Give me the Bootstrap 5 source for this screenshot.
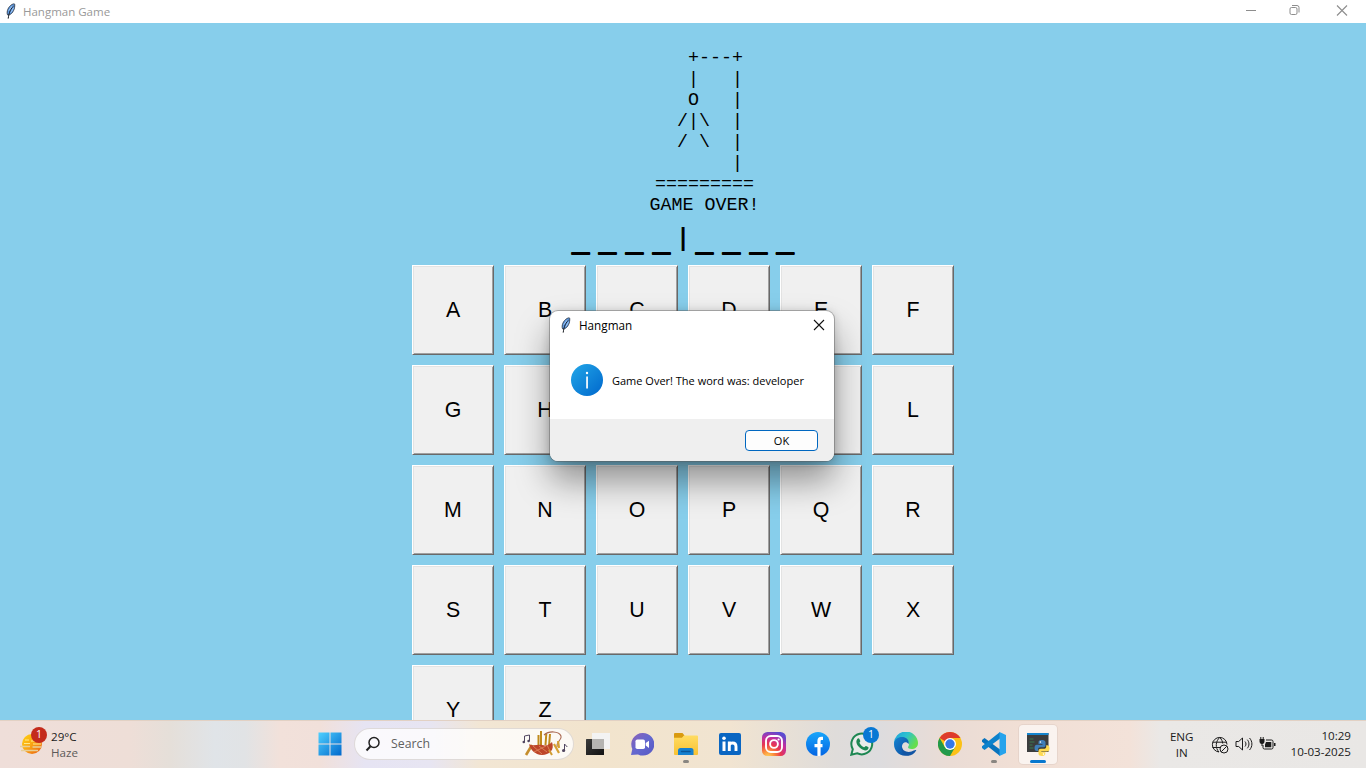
<!DOCTYPE html>
<html lang="en">
<head>
<meta charset="utf-8">
<meta name="viewport" content="width=device-width, initial-scale=1">
<title>Hangman Game</title>
<link href="https://cdn.jsdelivr.net/npm/bootstrap@5.3.0/dist/css/bootstrap.min.css" rel="stylesheet">
<style>
  body { font-family: "Open Sans", "Noto Sans", sans-serif; height: 768px; background: #87ceeb; color: #000; }
  svg { display: block; flex: none; }
  .titlebar { height: 23px; font-size: 11.5px; color: #999; background: #fff; }
  .win-controls { margin: -2px 2px 0 0; }
  .win-controls svg { width: 45.5px; height: 21px; }
  .game-area { min-height: 0; background: #87ceeb; }
  .gallows { font: 18.33px/21px "Liberation Mono", monospace; margin: 25px 0 0 43px; overflow: visible; color: #000; }
  .word { font: 32.3px/40px "Liberation Sans", sans-serif; height: 40px; margin-top: 4px; white-space: pre; }
  .word b { font-weight: 400; vertical-align: 3px; line-height: 1; text-shadow: 0 -1px #000; }
  .keys { display: grid; grid-template-columns: repeat(6, 82px); grid-auto-rows: 90px; gap: 10px; margin-top: 5px; }
  .key { font: 21.33px/1 "Liberation Sans", sans-serif; color: #000; background: #f0f0f0; border: 1px solid; border-color: #fff #696969 #696969 #fff; border-radius: 0; padding: 2px 0 0;
         box-shadow: inset 1px 1px #e3e3e3, inset -1px -1px #a0a0a0; }
  .dialog-box { left: 550px; top: 311px; width: 284px; height: 150px; border-radius: 8px; overflow: hidden; background: #fff;
            box-shadow: 0 0 0 1px rgba(90,90,90,.42), 0 1px 10px rgba(0,0,0,.18), 0 20px 34px rgba(0,0,0,.4); }
  .dialog-title { height: 30px; font-size: 11.7px; }
  .dialog-body { height: 78px; font-size: 11px; }
  .dialog-foot { height: 42px; background: #efefef; }
  .ok-btn { width: 73px; height: 21px; font-size: 11px; line-height: 1; padding: 0; background: #fdfdfd; border: 1px solid #0067c0; border-radius: 4px; color: #000; }
  .taskbar { height: 48px; border-top: 1px solid #e2d1c4; font-size: 11.6px; line-height: 16px; color: #1b1b1b;
             background: linear-gradient(90deg, #efded9 0, #eeded7 130px, #e5dfd9 170px, #e0e4e8 215px, #e1e3e5 245px, #f2e1da 280px, #f1e0da 320px, #e6e4f3 365px, #e7e5f2 430px, #f2e6d4 480px, #f2e4cd 600px, #f1e4d1 730px, #dfdcda 835px, #dddcde 880px, #eadcd5 950px, #f1dfd5 1020px, #f3e2d9 1130px, #eae8e6 1160px, #e9e7e5 100%); }
  .weather { width: 308px; padding-left: 20px; }
  .slot { width: 44px; height: 47px; }
  .slot.on::before { content: ""; position: absolute; inset: 4px 3px 4px 3px; background: rgba(255,255,255,.62); border-radius: 4px; box-shadow: 0 0 0 1px rgba(160,140,130,.12); }
  .slot > svg { position: relative; margin-top: -1px; }
  .run-dot { bottom: 5px; left: 19px; width: 6px; height: 3px; border-radius: 2px; background: #898681; }
  .run-bar { bottom: 5px; left: 14px; width: 16px; height: 3px; border-radius: 2px; background: #0878cf; }
  .search-pill { width: 220px; height: 32px; margin: -1px 2px 0 2px; border-radius: 16px; background: rgba(255,255,255,.78); border: 1px solid rgba(150,135,130,.28); color: #606060; font-size: 12.3px; }
  .count { width: 16px; height: 16px; border-radius: 50%; font-size: 10.5px; line-height: 15px; color: #fff; text-align: center; }
  .tray { padding-right: 15px; }
</style>
</head>
<body class="d-flex flex-column overflow-hidden position-relative">

<svg width="0" height="0" class="position-absolute">
  <defs>
    <symbol id="feather" viewBox="0 0 12 16">
      <path d="M2.500 11.800C1.300 8.500 3.300 3.500 7 1.500c1.500-.8 2.700-.9 2.700-.1.400 4-1.600 8.800-5.300 10.400z" fill="#5f9ae2" stroke="#242c38" stroke-width=".8"/>
      <path d="M8.500 2.800C6 5.500 4 9 3.200 15.600" fill="none" stroke="#14181f" stroke-width="1"/>
      <path d="M3.900 7.500 7.300 3M6 9.500 8.500 5" stroke="#a9cdf5" stroke-width=".9"/>
    </symbol>
    <linearGradient id="gWin" x1="0" y1="0" x2="1" y2="1"><stop offset="0" stop-color="#4fd0ff"/><stop offset="1" stop-color="#0068cc"/></linearGradient>
    <linearGradient id="gInfo" x1="0" y1="0" x2="1" y2="1"><stop offset="0" stop-color="#22a7e8"/><stop offset="1" stop-color="#0067cc"/></linearGradient>
    <linearGradient id="gSun" x1="0" y1="0" x2="1" y2="1"><stop offset="0" stop-color="#ffd413"/><stop offset=".5" stop-color="#f9a413"/><stop offset="1" stop-color="#ea5a12"/></linearGradient>
    <linearGradient id="gChat" x1="0" y1="0" x2="1" y2="1"><stop offset="0" stop-color="#8c62b8"/><stop offset=".5" stop-color="#6468cf"/><stop offset="1" stop-color="#5658c4"/></linearGradient>
    <linearGradient id="gFold" x1="0" y1="0" x2="0" y2="1"><stop offset="0" stop-color="#ffdc62"/><stop offset="1" stop-color="#f8c131"/></linearGradient>
    <radialGradient id="gInsta" cx=".25" cy="1.050" r="1.100"><stop offset="0" stop-color="#ffd65b"/><stop offset=".25" stop-color="#fb8c3c"/><stop offset=".5" stop-color="#e8354f"/><stop offset=".75" stop-color="#c22fa0"/><stop offset="1" stop-color="#5b4bd0"/></radialGradient>
    <linearGradient id="gFb" x1="0" y1="0" x2="0" y2="1"><stop offset="0" stop-color="#18a6fb"/><stop offset="1" stop-color="#0465e3"/></linearGradient>
    <linearGradient id="gEdge" x1="0" y1="0" x2="1" y2=".5"><stop offset="0" stop-color="#1e9fdd"/><stop offset=".5" stop-color="#2cc1cf"/><stop offset="1" stop-color="#66de4c"/></linearGradient>
    <linearGradient id="gEdge2" x1="0" y1="0" x2="1" y2="1"><stop offset="0" stop-color="#1583d2"/><stop offset="1" stop-color="#0c4a9c"/></linearGradient>
    <linearGradient id="gDark" x1="0" y1="0" x2="1" y2="1"><stop offset="0" stop-color="#3b3b3b"/><stop offset="1" stop-color="#111"/></linearGradient>
  </defs>
</svg>

<header class="titlebar d-flex align-items-center flex-shrink-0">
  <svg width="12" height="16" style="margin:-1px 6px 0 5px"><use href="#feather"/></svg>
  <span>Hangman Game</span>
  <div class="win-controls d-flex ms-auto">
    <svg viewBox="0 0 45.5 21"><path d="M18 10.500h10" stroke="#8d8d8d" fill="none"/></svg>
    <svg viewBox="0 0 45.5 21"><g stroke="#8d8d8d" fill="none"><rect x="17" y="7.500" width="7" height="7" rx="1.500"/><path d="M19 5.500h5a2 2 0 0 1 2 2v5"/></g></svg>
    <svg viewBox="0 0 45.5 21"><path d="m18 5.500 10 10m0-10-10 10" stroke="#8d8d8d" stroke-width="1.100" fill="none"/></svg>
  </div>
</header>

<main class="game-area flex-fill d-flex flex-column align-items-center overflow-hidden">
<div class="d-flex flex-column align-items-center">
<pre class="gallows mb-0 d-flex flex-column align-items-center"><span>   +---+ 
   |   | 
   O   | 
  /|\  | 
  / \  | 
       | 
=========</span><span>GAME OVER!</span></pre>
</div>
  <div class="word"><b>_ _ _ _ </b>l<b> _ _ _ _</b></div>
  <div class="keys flex-shrink-0">
    <button class="key">A</button><button class="key">B</button><button class="key">C</button><button class="key">D</button><button class="key">E</button><button class="key">F</button>
    <button class="key">G</button><button class="key">H</button><button class="key">I</button><button class="key">J</button><button class="key">K</button><button class="key">L</button>
    <button class="key">M</button><button class="key">N</button><button class="key">O</button><button class="key">P</button><button class="key">Q</button><button class="key">R</button>
    <button class="key">S</button><button class="key">T</button><button class="key">U</button><button class="key">V</button><button class="key">W</button><button class="key">X</button>
    <button class="key">Y</button><button class="key">Z</button>
  </div>
</main>

<section class="dialog-box position-absolute" role="dialog">
  <div class="dialog-title d-flex align-items-center">
    <svg width="12" height="16" style="margin:-2px 7px 0 10px"><use href="#feather"/></svg>
    <span>Hangman</span>
    <svg class="ms-auto" width="12" height="12" viewBox="0 0 12 12" style="margin:-2px 9px 0 0"><path d="m1 1 10 10M11 1 1 11" stroke="#111" stroke-width="1.100"/></svg>
  </div>
  <div class="dialog-body d-flex align-items-center">
    <svg width="32" height="32" viewBox="0 0 32 32" style="margin:-1px 9px 0 21px"><circle cx="16" cy="16" r="16" fill="url(#gInfo)"/><rect x="15.200" y="12.500" width="1.700" height="12" fill="#fff"/><circle cx="16" cy="9" r="1.200" fill="#fff"/></svg>
    <span style="padding-top:2px">Game Over! The word was: developer</span>
  </div>
  <div class="dialog-foot d-flex align-items-center justify-content-end pe-3">
    <button class="ok-btn">OK</button>
  </div>
</section>

<footer class="taskbar d-flex align-items-center flex-shrink-0">
  <div class="weather d-flex align-items-center flex-shrink-0">
    <div class="position-relative" style="margin:-2px 7px 0 0">
      <svg width="24" height="24" viewBox="0 0 24 24"><circle cx="12" cy="12" r="10" fill="url(#gSun)"/><path d="M5 8h4M11 9h5M4 11.500h6M13 12h8" stroke="#ffe98c" stroke-width="1.200"/><path d="M0 14.500h10M12.500 15h9M1 18.500h17" stroke="#e8cf96" stroke-width="1.600"/></svg>
      <span class="count position-absolute" style="left:11px;top:-5px;background:#c42b1c">1</span>
    </div>
    <div>29°C<br><span style="color:#5c5a59">Haze</span></div>
  </div>

  <div class="slot d-flex align-items-center justify-content-center flex-shrink-0">
    <svg width="24" height="24" viewBox="0 0 24 24"><path d="M.5.500h11v11H.5zM12.500.500h11v11h-11zM.5 12.500h11v11H.5zM12.500 12.500h11v11h-11z" fill="url(#gWin)"/></svg>
  </div>
  <div class="search-pill d-flex align-items-center flex-shrink-0">
    <svg width="16" height="16" viewBox="0 0 16 16" style="margin:0 10px 0 10px"><circle cx="9" cy="6.500" r="5" fill="none" stroke="#222" stroke-width="1.500"/><path d="M5.500 10.200 1.500 14.500" stroke="#222" stroke-width="2"/></svg>
    <span>Search</span>
    <svg class="ms-auto" width="48" height="28" viewBox="0 0 48 28" style="margin-right:3px" fill="none">
      <path d="M2.500 12V6l5-1v6" stroke="#514660"/><circle cx="1.800" cy="12" r="1.300" fill="#514660"/><circle cx="6.600" cy="11" r="1.300" fill="#514660"/>
      <path d="M42.500 20.500V14l2.800 3" stroke="#514660"/><circle cx="41.600" cy="20.500" r="1.600" fill="#514660"/>
      <path d="M16.500 16V5M19 16V1M23.500 15l.8-11M27 16l1-12" stroke="#c08a1d" stroke-width="2"/>
      <path d="M22 5c5-4.500 15-4 17 1 1.500 4-5 5-4 11" stroke="#a8664f" stroke-width="1.100"/>
      <path d="m10 15-6 10" stroke="#c58d2b" stroke-width="2.600"/>
      <path d="M7 14c4 3 8 0 13 1 4 1 7 0 10-3 3 8-3 13-10 13-7 0-12-6-13-11z" fill="#bd4529"/>
      <path d="m11 16 9 8M17 16l8 6M12 22l12-6M25 15l3 6" stroke="#dd865c" stroke-width=".9"/>
      <path d="m32 14 5 9M36 11l1 7" stroke="#d6a032" stroke-width="2.200"/><path d="m27 20 3 5" stroke="#d09b32" stroke-width="2"/>
    </svg>
  </div>

  <nav class="d-flex flex-shrink-0">
    <div class="slot d-flex align-items-center justify-content-center">
      <svg width="24" height="24" viewBox="0 0 24 24"><rect x="6" y="1" width="18" height="16" fill="#f3f3f3"/><rect x="0" y="7" width="18" height="16" rx=".5" fill="url(#gDark)"/><rect x="6" y="7" width="12" height="10" fill="#b5b4b2"/></svg>
    </div>
    <div class="slot d-flex align-items-center justify-content-center">
      <svg width="24" height="24" viewBox="0 0 24 24"><path d="M12.500 1A11.300 11.300 0 1 1 8 22.400L1 23l1.300-6A11.300 11.300 0 0 1 12.500 1z" fill="url(#gChat)"/><rect x="5.500" y="7.500" width="9.500" height="9.500" rx="1.800" fill="#fff"/><path d="m15.700 11 3.300-2.300v7.200L15.700 13.500z" fill="#fff"/></svg>
    </div>
    <div class="slot position-relative d-flex align-items-center justify-content-center">
      <svg width="24" height="24" viewBox="0 0 24 24"><path d="M0 2a1 1 0 0 1 1-1h7.500l2 2.500-2 2.500H0z" fill="#d99a10"/><path d="M0 5.800h8l2-2.300h13a1 1 0 0 1 1 1V22a1 1 0 0 1-1 1H1a1 1 0 0 1-1-1z" fill="url(#gFold)"/><path d="M4 23v-4.500a2.500 2.500 0 0 1 2.500-2.500h10.500a2.500 2.500 0 0 1 2.500 2.500V23z" fill="#1580cf"/><path d="M7.500 19.500h8.500" stroke="#0a5699" stroke-width="1.500" stroke-linecap="round"/></svg>
      <span class="run-dot position-absolute"></span>
    </div>
    <div class="slot d-flex align-items-center justify-content-center">
      <svg width="24" height="24" viewBox="0 0 24 24"><rect x="1" y="1" width="22" height="22" rx="2" fill="#0a66c2"/><circle cx="6" cy="6.300" r="1.800" fill="#fff"/><rect x="4.500" y="9.500" width="3" height="9.500" fill="#fff"/><path d="M11.300 19V9.500M11.300 14c0-4 6.700-4.200 6.700.4V19" fill="none" stroke="#fff" stroke-width="2.900"/></svg>
    </div>
    <div class="slot d-flex align-items-center justify-content-center">
      <svg width="24" height="24" viewBox="0 0 24 24"><rect width="24" height="24" rx="5.500" fill="url(#gInsta)"/><g fill="none" stroke="#fff" stroke-width="1.900"><rect x="4" y="4" width="16" height="16" rx="4.800"/><circle cx="12" cy="12" r="3.900"/></g><circle cx="16.600" cy="7.500" r="1.100" fill="#fff"/></svg>
    </div>
    <div class="slot d-flex align-items-center justify-content-center">
      <svg width="24" height="24" viewBox="0 0 24 24"><circle cx="12" cy="12" r="12" fill="url(#gFb)"/><path d="M17 6.300h-1.500c-2 0-2.500 1-2.500 2.700V23.900M8.500 13.700h8" fill="none" stroke="#fff" stroke-width="3.200"/></svg>
    </div>
    <div class="slot position-relative d-flex align-items-center justify-content-center">
      <svg width="24" height="24" viewBox="0 0 24 24"><path d="m1.300 22.700 1.500-5.500A10.400 10.400 0 1 1 7 21.200z" fill="#e9ebe9" stroke="#1d8752" stroke-width="2"/><path d="M7.400 6.800c1-1 1.700-.6 2 .2l.9 2c.2.700-1 1.500-.8 2 1 2 2.400 3.300 4.500 4.200.700.200 1.300-1.500 2-1.200l2.200 1.100c.6.300.4 1.700-.4 2.400-2 1.800-4.800.6-7-.9-2.300-1.700-6.400-6-3.400-9.800z" fill="#1d8752"/></svg>
      <span class="count position-absolute" style="left:23px;top:6px;background:#0878d4">1</span>
    </div>
    <div class="slot d-flex align-items-center justify-content-center">
      <svg width="24" height="24" viewBox="0 0 24 24"><path d="M0 12A12 12 0 0 1 24 11c0 4-3 6-6.500 6-3 0-4-1.300-3.200-2.500 2-3-1-6.500-5-6C4 9 0 11 0 12z" fill="url(#gEdge)"/><path d="M0 12c0-5 5-7.500 9-7 4 .5 6.500 4 5.500 7-2-3-6-2-6.500 2-.5 5 4 9 7.500 9C7 26 0 20 0 12z" fill="url(#gEdge2)"/><path d="M8 14.500c0 4 5 6.500 9.500 5 2-.6 4-2 4.800-1.200C20 23 15 24.800 11 23 8 21 7 17 8 14.500z" fill="#1255a4"/></svg>
    </div>
    <div class="slot d-flex align-items-center justify-content-center">
      <svg width="24" height="24" viewBox="0 0 24 24"><circle cx="12" cy="12" r="12" fill="#fbc116"/><path d="M12 12 1.600 6A12 12 0 0 1 22.400 6H12z" fill="#de3b2c"/><path d="M1.600 6 6.800 15l5.200 3 5.200-3L12 24A12 12 0 0 1 1.600 6z" fill="#229a4b"/><circle cx="12" cy="12" r="6" fill="#fff"/><circle cx="12" cy="12" r="4.700" fill="#3478e8"/></svg>
    </div>
    <div class="slot position-relative d-flex align-items-center justify-content-center">
      <svg width="24" height="24" viewBox="0 0 24 24"><path d="M0 8 2.500 6 18 17.500V24L0 9.800z" fill="#0873bd"/><path d="M0 16 2.500 18 18 6.500V0L0 14.300z" fill="#0d82cc"/><path d="M17.500 0 24 3v18l-6.500 3z" fill="#26a3ec"/></svg>
      <span class="run-dot position-absolute"></span>
    </div>
    <div class="slot on position-relative d-flex align-items-center justify-content-center">
      <svg width="24" height="24" viewBox="0 0 24 24"><rect x="1" y="1" width="21.500" height="19" fill="#3b3d3e"/><rect x="1" y="1" width="21.500" height="2" fill="#1585ce"/><path d="M3.500 7h4M3.500 10h5M3.500 13h3M3.500 16h4" stroke="#3a7a50"/>
        <path d="M15.500 8c-2.500 0-3 1-3 2.500V12h4v.7h-5.500C9 12.700 8.500 14 8.500 16s.8 3 2.300 3H12v-1.500c0-1.500 1-2.300 2.500-2.300h3c1.300 0 2-.8 2-2v-3C19.500 8.500 17.500 8 15.500 8z" fill="#3f7db8"/>
        <path d="M16 24c2.500 0 3.300-1 3.300-2.500v-1.200h-4v-.7h5.500c2 0 2.700-1.300 2.700-3.300s-.8-3.100-2.300-3.100h-1v1.500c0 1.300-1 2.100-2.200 2.100h-3.200c-1.400 0-2.300.8-2.300 2v3C12.500 23.500 14 24 16 24z" fill="#fed94e"/><circle cx="14.400" cy="10" r=".8" fill="#fff"/><circle cx="17.500" cy="22.100" r=".8" fill="#fff"/></svg>
      <span class="run-bar position-absolute"></span>
    </div>
  </nav>

  <div class="tray d-flex align-items-center ms-auto flex-shrink-0">
    <div class="text-center" style="margin-right:17px">ENG<br>IN</div>
    <svg width="18" height="18" viewBox="0 0 18 18" style="margin-right:6px" fill="none" stroke="#1b1b1b"><path d="M8 16A7.300 7.300 0 1 1 16 8.500M1.500 6.200h14M1.500 11.500H9M8 16C4 12 4.500 5 8.800 1.500c2 2 2.700 4 2.900 6"/><circle cx="13" cy="13" r="4"/><path d="m10.300 15.700 5.400-5.400"/></svg>
    <svg width="18" height="16" viewBox="0 0 18 16" style="margin:-1px 6px 0 0" fill="none" stroke="#1b1b1b"><path d="M1 5.500h2.700L7.500 2v12L3.700 10.500H1zM10 5.500c1.300 1.500 1.300 3.500 0 5M12.300 3.700c2.200 2.500 2.200 6 0 8.600M14.500 2c3.200 3.500 3.200 8.500 0 12"/></svg>
    <svg width="17" height="16" viewBox="0 0 17 16" style="margin:-2px 15px 0 0"><path d="M7 4h5.500a1.500 1.500 0 0 1 1.500 1.500v6a1.500 1.500 0 0 1-1.500 1.500H5.500a1.500 1.500 0 0 1-1.500-1.500V9" fill="none" stroke="#1b1b1b"/><path d="M7 6h5.300v5.300H6V8.500zM15 7h1.500v3H15z" fill="#1b1b1b"/><path d="M.5 3h5v2.500A2.500 2.500 0 0 1 3.500 8v2h-1V8A2.500 2.500 0 0 1 .5 5.500zM1.300 1h1v2h-1zM3.700 1h1v2h-1z" fill="#1b1b1b"/></svg>
    <div class="text-end" style="margin-top:-1px">10:29<br>10-03-2025</div>
  </div>
</footer>
<script src="https://cdn.jsdelivr.net/npm/bootstrap@5.3.0/dist/js/bootstrap.bundle.min.js"></script>
</body>
</html>
